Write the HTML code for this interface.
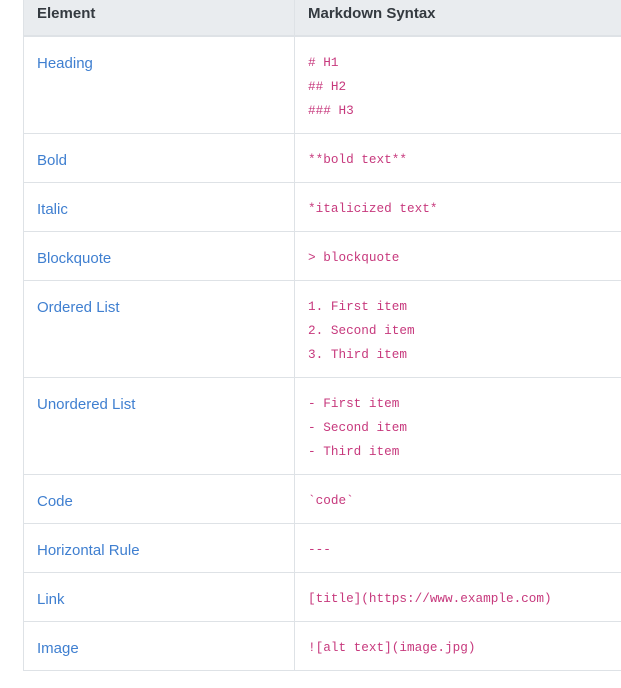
<!DOCTYPE html>
<html><head><style>
body{margin:0;background:#fff;width:621px;height:688px;overflow:hidden;position:relative;font-family:"Liberation Sans",sans-serif}
.hd{position:absolute;left:23px;top:0;width:600px;height:35px;background:#e9ecef;border-bottom:2px solid #dee2e6;border-left:1px solid #dee2e6}
.h{position:absolute;top:5px;font-weight:bold;font-size:15px;color:#343a40}
.row{position:absolute;left:23px;width:600px;border-left:1px solid #dee2e6;border-bottom:1px solid #dee2e6}
.v{position:absolute;left:294px;top:37px;width:1px;height:633px;background:#dee2e6}
.l{position:absolute;left:13px;top:18px;font-size:15px;color:#3f7fd0}
.c{position:absolute;left:284px;font-family:"Liberation Mono",monospace;font-size:12.7px;color:#c7397d;line-height:24px;white-space:pre}
</style></head><body>
<div class="hd"><span class="h" style="left:13px">Element</span><span class="h" style="left:284px">Markdown Syntax</span></div>
<div class="row" style="top:37px;height:96px"><span class="l">Heading</span><span class="c" style="top:14px"># H1
## H2
### H3</span></div>
<div class="row" style="top:134px;height:48px"><span class="l">Bold</span><span class="c" style="top:14px">**bold text**</span></div>
<div class="row" style="top:183px;height:48px"><span class="l">Italic</span><span class="c" style="top:14px">*italicized text*</span></div>
<div class="row" style="top:232px;height:48px"><span class="l">Blockquote</span><span class="c" style="top:14px">&gt; blockquote</span></div>
<div class="row" style="top:281px;height:96px"><span class="l">Ordered List</span><span class="c" style="top:14px">1. First item
2. Second item
3. Third item</span></div>
<div class="row" style="top:378px;height:96px"><span class="l">Unordered List</span><span class="c" style="top:14px">- First item
- Second item
- Third item</span></div>
<div class="row" style="top:475px;height:48px"><span class="l">Code</span><span class="c" style="top:14px">`code`</span></div>
<div class="row" style="top:524px;height:48px"><span class="l">Horizontal Rule</span><span class="c" style="top:14px">---</span></div>
<div class="row" style="top:573px;height:48px"><span class="l">Link</span><span class="c" style="top:14px">[title](https://www.example.com)</span></div>
<div class="row" style="top:622px;height:48px"><span class="l">Image</span><span class="c" style="top:14px">![alt text](image.jpg)</span></div>
<div class="v"></div>
<div style="position:absolute;left:294px;top:0;width:1px;height:36px;background:#dee2e6"></div>
</body></html>
